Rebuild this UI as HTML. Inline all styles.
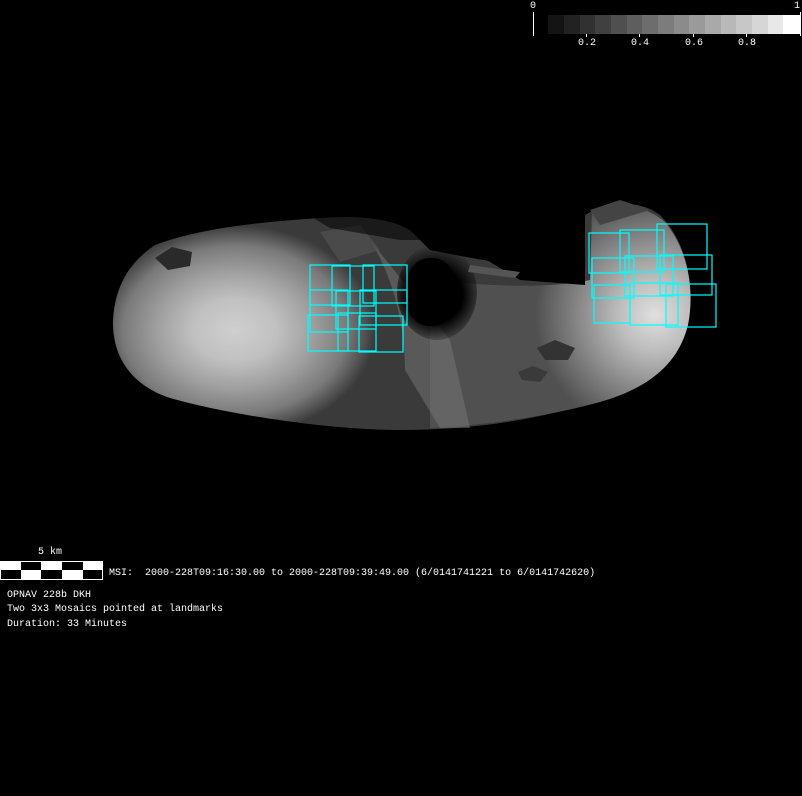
<!DOCTYPE html>
<html><head><meta charset="utf-8"><style>
html,body{margin:0;padding:0;background:#000;width:802px;height:796px;overflow:hidden}
.t{position:absolute;color:#fff;font-family:"Liberation Mono",monospace;font-size:10px;line-height:10px;white-space:pre}
</style></head><body>
<svg width="802" height="796" style="position:absolute;left:0;top:0">
<defs>
<radialGradient id="gl" cx="235" cy="330" r="140" gradientUnits="userSpaceOnUse" gradientTransform="translate(235 330) scale(1 0.75) translate(-235 -330)">
<stop offset="0" stop-color="#cfcfcf"/><stop offset="0.3" stop-color="#c0c0c0"/><stop offset="0.55" stop-color="#a0a0a0"/><stop offset="0.8" stop-color="#7a7a7a"/><stop offset="1" stop-color="#3a3a3a"/></radialGradient>
<radialGradient id="gr" cx="655" cy="315" r="120" gradientUnits="userSpaceOnUse">
<stop offset="0" stop-color="#e0e0e0"/><stop offset="0.3" stop-color="#bdbdbd"/><stop offset="0.6" stop-color="#8e8e8e"/><stop offset="1" stop-color="#505050"/></radialGradient>
<radialGradient id="gh" cx="435" cy="295" r="50" gradientUnits="userSpaceOnUse">
<stop offset="0.55" stop-color="#000"/><stop offset="1" stop-color="#000" stop-opacity="0"/></radialGradient>
</defs>
<g>
<rect x="548" y="15" width="16" height="19" fill="#141414"/><rect x="564" y="15" width="16" height="19" fill="#222"/>
<rect x="580" y="15" width="15" height="19" fill="#313131"/><rect x="595" y="15" width="16" height="19" fill="#404040"/>
<rect x="611" y="15" width="16" height="19" fill="#4f4f4f"/><rect x="627" y="15" width="15" height="19" fill="#5e5e5e"/>
<rect x="642" y="15" width="16" height="19" fill="#6d6d6d"/><rect x="658" y="15" width="16" height="19" fill="#7c7c7c"/>
<rect x="674" y="15" width="15" height="19" fill="#8b8b8b"/><rect x="689" y="15" width="16" height="19" fill="#9a9a9a"/>
<rect x="705" y="15" width="16" height="19" fill="#a9a9a9"/><rect x="721" y="15" width="15" height="19" fill="#b8b8b8"/>
<rect x="736" y="15" width="16" height="19" fill="#c7c7c7"/><rect x="752" y="15" width="16" height="19" fill="#d6d6d6"/>
<rect x="768" y="15" width="15" height="19" fill="#e8e8e8"/><rect x="783" y="15" width="17" height="19" fill="#fff"/>
<rect x="533" y="12" width="1" height="24" fill="#fff"/><rect x="800" y="12" width="1" height="24" fill="#fff"/>
<rect x="586" y="34" width="1" height="3" fill="#fff"/><rect x="639" y="34" width="1" height="3" fill="#fff"/>
<rect x="693" y="34" width="1" height="3" fill="#fff"/><rect x="746" y="34" width="1" height="3" fill="#fff"/>
</g>
<path d="M113,320 C115,285 130,262 155,245 C200,228 260,222 320,218 C370,214 400,222 412,232 L430,250 C470,258 520,268 585,270 L585,215 C610,200 640,200 660,215 C685,240 695,280 688,320 C680,360 650,385 600,400 C540,420 470,430 400,430 C330,430 230,415 170,398 C130,385 112,355 113,320 Z" fill="url(#gl)"/>
<path d="M430,280 C480,285 540,290 590,280 L592,212 C615,200 645,205 665,222 C688,250 695,290 688,325 C678,365 648,388 600,402 C550,416 480,426 430,428 Z" fill="url(#gr)"/>
<path d="M370,240 C395,280 405,330 405,370 L440,428 L470,428 L450,340 Z" fill="#777" opacity="0.5"/>
<path d="M320,232 L360,225 L380,250 L340,262 Z" fill="#555" opacity="0.6"/>
<ellipse cx="437" cy="292" rx="40" ry="48" fill="url(#gh)"/>
<path d="M400,225 L440,240 L470,250 L520,280 L585,285 L585,205 L400,205 Z" fill="#000"/>
<path d="M300,210 L400,205 L440,240 L400,240 L330,228 Z" fill="#000" opacity="0.55"/>
<rect x="408" y="258" width="46" height="68" rx="22" fill="#000"/>
<polygon points="470,265 520,272 515,278 468,272" fill="#555"/>
<polygon points="590,210 620,200 650,210 600,225" fill="#444"/>
<polygon points="155,258 172,247 192,252 190,266 168,270" fill="#2a2a2a"/>
<polygon points="537,348 555,340 575,348 568,360 545,360" fill="#333"/>
<polygon points="518,372 533,366 548,372 540,382 522,380" fill="#3a3a3a"/>
<g fill="none" stroke="#00ffff" stroke-width="1.2">
<rect x="310" y="265" width="40" height="40"/><rect x="332" y="266" width="42" height="40"/><rect x="363" y="265" width="44" height="38"/>
<rect x="310" y="290" width="38" height="42"/><rect x="336" y="291" width="40" height="38"/><rect x="360" y="290" width="47" height="35"/>
<rect x="308" y="315" width="40" height="36"/><rect x="338" y="313" width="38" height="38"/><rect x="359" y="316" width="44" height="36"/>
<rect x="589" y="233" width="40" height="40"/><rect x="620" y="230" width="44" height="42"/><rect x="657" y="224" width="50" height="45"/>
<rect x="592" y="258" width="42" height="40"/><rect x="625" y="256" width="48" height="40"/><rect x="660" y="255" width="52" height="40"/>
<rect x="594" y="285" width="36" height="38"/><rect x="630" y="283" width="48" height="42"/><rect x="666" y="284" width="50" height="43"/>
</g>
<rect x="0.5" y="561.5" width="102" height="18" fill="#fff" stroke="#fff"/>
<rect x="21" y="562" width="20" height="8" fill="#000"/><rect x="62" y="562" width="21" height="8" fill="#000"/>
<rect x="1" y="570" width="20" height="9" fill="#000"/><rect x="41" y="570" width="21" height="9" fill="#000"/><rect x="83" y="570" width="19" height="9" fill="#000"/>
</svg>
<div class="t" style="left:530px;top:2px">0</div>
<div class="t" style="left:794px;top:2px">1</div>
<div class="t" style="left:578px;top:39px">0.2</div>
<div class="t" style="left:631px;top:39px">0.4</div>
<div class="t" style="left:685px;top:39px">0.6</div>
<div class="t" style="left:738px;top:39px">0.8</div>
<div class="t" style="left:38px;top:548px">5 km</div>
<div class="t" style="left:109px;top:569px">MSI:  2000-228T09:16:30.00 to 2000-228T09:39:49.00 (6/0141741221 to 6/0141742620)</div>
<div class="t" style="left:7px;top:591px">OPNAV 228b DKH</div>
<div class="t" style="left:7px;top:605px">Two 3x3 Mosaics pointed at landmarks</div>
<div class="t" style="left:7px;top:620px">Duration: 33 Minutes</div>
</body></html>
